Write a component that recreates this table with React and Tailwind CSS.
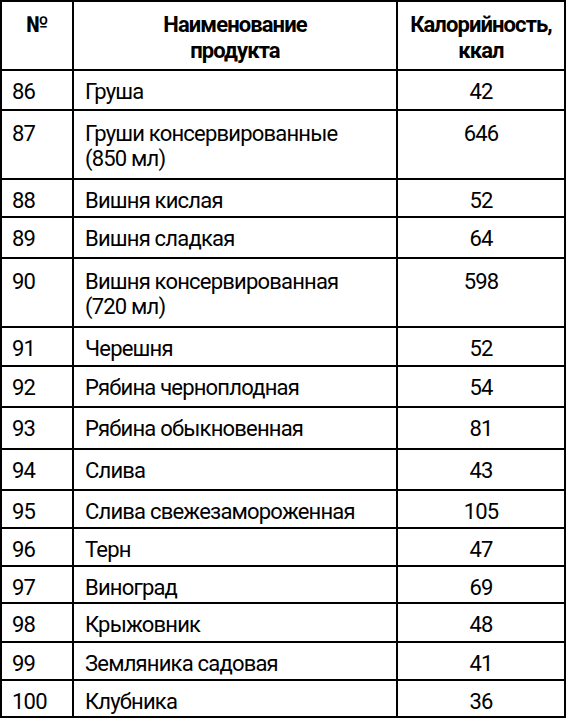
import React from "react";

const rows = [
  { n: "86", name: ["Груша"], kcal: "42", h: "h-[40px]" },
  { n: "87", name: ["Груши консервированные", "(850 мл)"], kcal: "646", h: "h-[69px]" },
  { n: "88", name: ["Вишня кислая"], kcal: "52", h: "h-[38px]" },
  { n: "89", name: ["Вишня сладкая"], kcal: "64", h: "h-[41px]" },
  { n: "90", name: ["Вишня консервированная", "(720 мл)"], kcal: "598", h: "h-[69px]" },
  { n: "91", name: ["Черешня"], kcal: "52", h: "h-[39px]" },
  { n: "92", name: ["Рябина черноплодная"], kcal: "54", h: "h-[41px]" },
  { n: "93", name: ["Рябина обыкновенная"], kcal: "81", h: "h-[42px]" },
  { n: "94", name: ["Слива"], kcal: "43", h: "h-[41px]" },
  { n: "95", name: ["Слива свежезамороженная"], kcal: "105", h: "h-[38px]" },
  { n: "96", name: ["Терн"], kcal: "47", h: "h-[38px]" },
  { n: "97", name: ["Виноград"], kcal: "69", h: "h-[37px]" },
  { n: "98", name: ["Крыжовник"], kcal: "48", h: "h-[39px]" },
  { n: "99", name: ["Земляника садовая"], kcal: "41", h: "h-[38px]" },
  { n: "100", name: ["Клубника"], kcal: "36", h: "h-[37px]" },
];

const font = {
  fontFamily: 'Roboto, "Liberation Sans", sans-serif',
};

export default function App() {
  return (
    <div className="bg-white w-[570px] h-[720px] text-black" style={font}>
      <div className="w-[566px] border-l-2 border-r-2 border-b-2 border-black">
        <div className="grid grid-cols-[70px_324px_168px] h-[69px] border-t-2 border-black font-bold text-[22px] leading-[26px] tracking-[-0.9px] text-center">
          <div className="pt-[10px]">№</div>
          <div className="border-l-2 border-black pt-[10px]">
            Наименование
            <br />
            продукта
          </div>
          <div className="border-l-2 border-black pt-[10px]">
            Калорийность,
            <br />
            ккал
          </div>
        </div>
        {rows.map((r) => {
          const pt = r.name.length > 1 ? "pt-[10px]" : "pt-[8px]";
          return (
            <div
              key={r.n}
              className={`grid grid-cols-[70px_324px_168px] border-t-2 border-black text-[22px] leading-[25px] tracking-[-0.8px] ${r.h}`}
            >
              <div className={`pl-[10px] ${pt}`}>{r.n}</div>
              <div className={`border-l-2 border-black pl-[11px] ${pt}`}>
                {r.name.map((l, i) => (
                  <div key={i}>{l}</div>
                ))}
              </div>
              <div className={`border-l-2 border-black text-center ${pt}`}>{r.kcal}</div>
            </div>
          );
        })}
      </div>
    </div>
  );
}
